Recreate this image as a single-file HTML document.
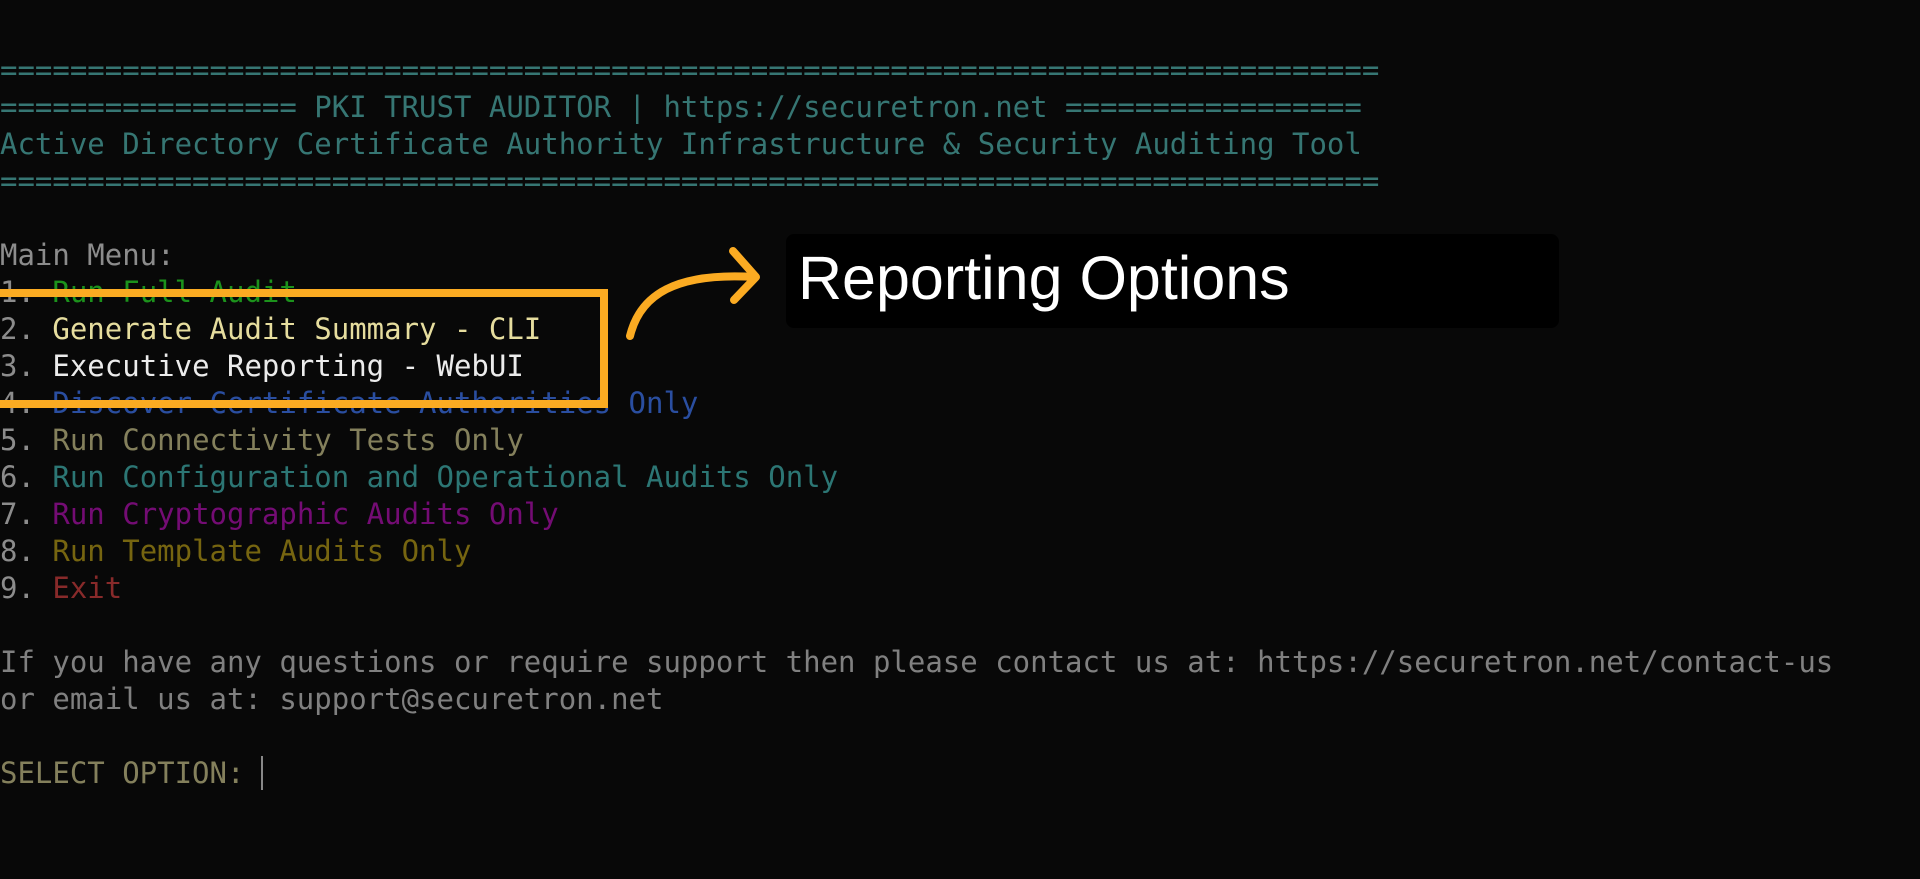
<!DOCTYPE html>
<html><head><meta charset="utf-8"><style>
html,body{margin:0;padding:0;background:#080808;width:1920px;height:879px;overflow:hidden;position:relative}
pre{position:absolute;left:0;top:52px;margin:0;font-family:"DejaVu Sans Mono","Liberation Mono",monospace;font-size:29px;line-height:37px;color:#888;letter-spacing:0}
.t{color:#367673}.g{color:#8c8c8c}.c1{color:#1c921c}.c2{color:#e6dd9e}.c3{color:#ececec}.c4{color:#2a4ea0}.c5{color:#84805c}.c6{color:#2c7674}.c7{color:#740c74}.c8{color:#766510}.c9{color:#882a2a}.k{color:#84805c}.n{color:#808080}
.box{position:absolute;left:-10px;top:289px;width:602px;height:103px;border:8px solid #fbab22}
.lbl{position:absolute;left:786px;top:234px;width:773px;height:94px;background:#000;border-radius:8px}
.lbl span{position:absolute;left:12px;top:8px;font-family:"Liberation Sans",sans-serif;font-size:61px;color:#fff;line-height:72px}
.cur{position:absolute;left:261px;top:756px;width:2px;height:34px;background:#888}
svg{position:absolute;left:0;top:0}
</style></head><body>
<pre><span class="t">===============================================================================
================= PKI TRUST AUDITOR | https://securetron.net =================
Active Directory Certificate Authority Infrastructure &amp; Security Auditing Tool
===============================================================================</span>

<span class="g">Main Menu:</span>
<span class="g">1. </span><span class="c1">Run Full Audit</span>
<span class="g">2. </span><span class="c2">Generate Audit Summary - CLI</span>
<span class="g">3. </span><span class="c3">Executive Reporting - WebUI</span>
<span class="g">4. </span><span class="c4">Discover Certificate Authorities Only</span>
<span class="g">5. </span><span class="c5">Run Connectivity Tests Only</span>
<span class="g">6. </span><span class="c6">Run Configuration and Operational Audits Only</span>
<span class="g">7. </span><span class="c7">Run Cryptographic Audits Only</span>
<span class="g">8. </span><span class="c8">Run Template Audits Only</span>
<span class="g">9. </span><span class="c9">Exit</span>

<span class="n">If you have any questions or require support then please contact us at: https://securetron.net/contact-us
or email us at: support@securetron.net</span>

<span class="k">SELECT OPTION: </span></pre>
<div class="cur"></div>
<div class="box"></div>
<div class="lbl"><span>Reporting Options</span></div>
<svg width="1920" height="879"><path d="M630 336 C640 295 675 272 755 277" fill="none" stroke="#fbab22" stroke-width="8" stroke-linecap="round"/><path d="M733 251 L756 277 L734 300" fill="none" stroke="#fbab22" stroke-width="8" stroke-linecap="round" stroke-linejoin="round"/></svg>
</body></html>
